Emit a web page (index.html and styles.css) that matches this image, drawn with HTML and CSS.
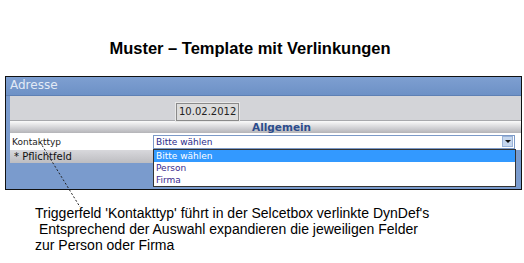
FILE: index.html
```html
<!DOCTYPE html>
<html>
<head>
<meta charset="utf-8">
<link rel="stylesheet" href="styles.css">
</head>
<body>
<h1 class="title">Muster – Template mit Verlinkungen</h1>
<div class="frame">
  <div class="header">Adresse</div>
  <div class="panel">
    <div class="daterow"><span class="date">10.02.2012</span></div>
    <div class="section">Allgemein</div>
    <div class="row">
      <span class="label">Kontakttyp</span>
      <div class="select"><span>Bitte wählen</span><span class="arrow"></span></div>
    </div>
    <div class="footer"><span class="req">* Pflichtfeld</span></div>
    <ul class="dropdown">
      <li class="sel">Bitte wählen</li>
      <li>Person</li>
      <li>Firma</li>
    </ul>
  </div>
</div>
<svg class="leader" width="524" height="263"><line x1="40" y1="142" x2="80" y2="207" stroke="#222" stroke-width="1" stroke-dasharray="2,2"/></svg>
<div class="note">
  <div>Triggerfeld 'Kontakttyp' führt in der Selcetbox verlinkte DynDef's</div>
  <div>&nbsp;Entsprechend der Auswahl expandieren die jeweiligen Felder</div>
  <div>zur Person oder Firma</div>
</div>
</body>
</html>
```
FILE: styles.css
```css
body {
  margin: 0;
  background: #fff;
  font-family: "Liberation Sans", Arial, sans-serif;
  position: relative;
  width: 524px;
  height: 263px;
  overflow: hidden;
}
.title {
  margin: 39px 0 0 0;
  padding-right: 24px;
  text-align: center;
  font-size: 16.5px;
  font-weight: bold;
  line-height: 18px;
  color: #000;
}
.frame {
  margin: 19px 0 0 5px;
  width: 515px;
  height: 112px;
  border: 1px solid #111;
  background: #7a9bcd;
  font-family: "DejaVu Sans", Verdana, sans-serif;
}
.header {
  height: 18px;
  line-height: 17px;
  padding-left: 4px;
  font-size: 12px;
  color: #e2eaf6;
  background: linear-gradient(#7e9fd1, #6d91c6);
  border-bottom: 1px solid #5e80b4;
}
.panel {
  position: relative;
  margin-left: 4px;
}
.daterow {
  height: 25px;
  background: #d3d4d8;
  border-bottom: 1px solid #a8a9ad;
  padding-left: 166px;
  padding-top: 4px;
  box-sizing: border-box;
}
.date {
  display: inline-block;
  border: 1px solid #8a8a8a;
  outline: 1px solid #e8e8e8;
  background: #dcdcdc;
  font-size: 10px;
  color: #222;
  padding: 2px 2px;
  line-height: 12px;
}
.section {
  height: 12px;
  line-height: 12px;
  background: linear-gradient(#fbfbfb, #c9c9cd 70%, #b4b4b8);
  font-size: 10.5px;
  font-weight: bold;
  color: #2c4c8c;
  padding-left: 242px;
}
.row {
  height: 17px;
  background: #fff;
  display: flex;
  align-items: center;
}
.label {
  width: 143px;
  padding-left: 2px;
  font-size: 9px;
  color: #222;
  box-sizing: border-box;
}
.select {
  width: 362px;
  height: 14px;
  border: 1px solid #7c9ac8;
  box-sizing: border-box;
  font-size: 9px;
  line-height: 12px;
  color: #2a2a8a;
  padding-left: 2px;
  display: flex;
  justify-content: space-between;
  align-items: center;
  background: #fff;
}
.arrow {
  width: 9px;
  height: 9px;
  background: #c6d7ee;
  border: 1px solid #9ab3d8;
  position: relative;
  margin-right: 1px;
}
.arrow::after {
  content: "";
  position: absolute;
  left: 2px;
  top: 3px;
  border-left: 3px solid transparent;
  border-right: 3px solid transparent;
  border-top: 3px solid #111;
}
.footer {
  height: 13px;
}
.req {
  display: block;
  width: 143px;
  height: 13px;
  line-height: 13px;
  padding-left: 4px;
  box-sizing: border-box;
  font-size: 10px;
  color: #111;
  background: linear-gradient(#d8d8dc, #bdbdc1);
}
.dropdown {
  position: absolute;
  left: 143px;
  top: 53px;
  width: 363px;
  margin: 0;
  padding: 0;
  list-style: none;
  background: #fff;
  border: 1px solid #333;
  box-sizing: border-box;
  font-size: 9px;
  color: #3a2a8e;
}
.dropdown li {
  height: 12px;
  line-height: 12px;
  padding-left: 2px;
}
.dropdown li.sel {
  background: #3399ff;
  color: #fff;
}
.leader {
  position: absolute;
  left: 0;
  top: 0;
  pointer-events: none;
}
.note {
  margin: 15px 0 0 35px;
  font-size: 14px;
  line-height: 16px;
  color: #000;
}
```
